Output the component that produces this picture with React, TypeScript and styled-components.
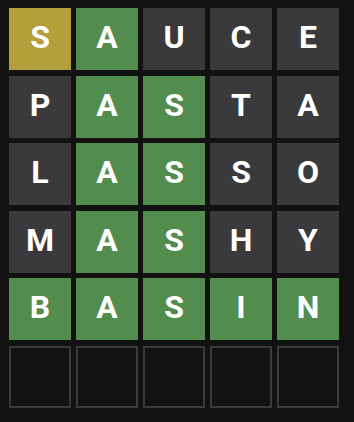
import React from 'react';
import styled, { createGlobalStyle } from 'styled-components';

type TileState = 'correct' | 'present' | 'absent' | 'empty';

interface Guess {
  word: string;
  states: TileState[];
}

const GlobalStyle = createGlobalStyle`
  html, body {
    margin: 0;
    padding: 0;
    background: #121213;
  }
`;

const Board = styled.div`
  display: grid;
  grid-template-rows: repeat(6, 1fr);
  gap: 5.5px;
  width: 330px;
  height: 400px;
  padding: 8px 15px 14px 9px;
  font-family: Roboto, "Liberation Sans", sans-serif;
`;

const Row = styled.div`
  display: grid;
  grid-template-columns: repeat(5, 1fr);
  gap: 5px;
`;

const tileColors: Record<TileState, string> = {
  correct: '#538d4e',
  present: '#b59f3b',
  absent: '#3a3a3c',
  empty: '#121213',
};

const Tile = styled.div<{ $state: TileState }>`
  display: flex;
  align-items: center;
  justify-content: center;
  box-sizing: border-box;
  background-color: ${p => tileColors[p.$state]};
  border: ${p => (p.$state === 'empty' ? '2px solid #3a3a3c' : 'none')};
  color: #ffffff;
  font-size: 32px;
  font-weight: 700;
  line-height: 1;
  padding-bottom: 4px;
  text-transform: uppercase;
`;

const c: TileState = 'correct';
const p: TileState = 'present';
const a: TileState = 'absent';

const guesses: Guess[] = [
  { word: 'SAUCE', states: [p, c, a, a, a] },
  { word: 'PASTA', states: [a, c, c, a, a] },
  { word: 'LASSO', states: [a, c, c, a, a] },
  { word: 'MASHY', states: [a, c, c, a, a] },
  { word: 'BASIN', states: [c, c, c, c, c] },
];

const App: React.FC = () => {
  const rows: Guess[] = [...guesses];
  while (rows.length < 6) {
    rows.push({ word: '     ', states: ['empty', 'empty', 'empty', 'empty', 'empty'] });
  }

  return (
    <>
      <GlobalStyle />
      <Board>
        {rows.map((guess, i) => (
          <Row key={i}>
            {guess.word.split('').map((letter, j) => (
              <Tile key={j} $state={guess.states[j]}>
                {letter.trim()}
              </Tile>
            ))}
          </Row>
        ))}
      </Board>
    </>
  );
};

export default App;
